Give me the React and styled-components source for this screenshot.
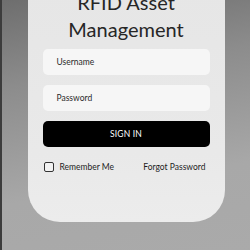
import React from "react";
import styled, { createGlobalStyle } from "styled-components";

const GlobalStyle = createGlobalStyle`
  html, body {
    margin: 0;
    padding: 0;
    width: 250px;
    height: 250px;
    overflow: hidden;
  }
  body {
    font-family: "Lato", "Open Sans", sans-serif;
  }
`;

export default function App() {
  return (
    <>
      <GlobalStyle />
      <Page>
        <Card>
          <Title>
            RFID Asset
            <br />
            Management
          </Title>
          <Form>
            <Field>Username</Field>
            <Field>Password</Field>
            <SignIn>SIGN IN</SignIn>
          </Form>
          <Options>
            <Remember>
              <Box />
              Remember Me
            </Remember>
            <Forgot>Forgot Password</Forgot>
          </Options>
        </Card>
      </Page>
    </>
  );
}

const Page = styled.div`
  width: 250px;
  height: 250px;
  box-sizing: border-box;
  border-left: 2px solid #3c3c3c;
  background: linear-gradient(170deg, #6e6e6e 0%, #8c8c8c 30%, #a8a8a8 70%, #aaaaaa 100%);
  display: flex;
  justify-content: center;
  overflow: hidden;
`;

const Card = styled.div`
  width: 197px;
  height: 233px;
  margin-top: -11px;
  box-sizing: border-box;
  background: linear-gradient(180deg, #e6e6e6 0%, #e9e9e9 70%, #ececec 100%);
  border-radius: 0 0 32px 32px;
  display: flex;
  flex-direction: column;
  padding: 0 15px 0 15px;
`;

const Title = styled.h1`
  margin: 0;
  font-family: "Lato", sans-serif;
  font-weight: 400;
  font-size: 20px;
  line-height: 27px;
  color: #262626;
  text-align: center;
`;

const Form = styled.div`
  display: flex;
  flex-direction: column;
  gap: 10px;
  margin-top: 6px;
`;

const Field = styled.div`
  height: 26px;
  border-radius: 5px;
  background: #f6f6f6;
  display: flex;
  align-items: center;
  padding-left: 14px;
  font-size: 8.5px;
  color: #2a2a2a;
`;

const SignIn = styled.button`
  height: 26px;
  border: none;
  border-radius: 5px;
  background: #000;
  color: #fff;
  font-family: "Lato", sans-serif;
  font-size: 8.5px;
  font-weight: 400;
  letter-spacing: 0.2px;
  padding: 0;
`;

const Options = styled.div`
  display: flex;
  align-items: center;
  justify-content: space-between;
  margin-top: 15px;
  padding-left: 1px;
  padding-right: 4px;
  font-size: 8.5px;
  color: #1e1e1e;
`;

const Remember = styled.label`
  display: flex;
  align-items: center;
  gap: 6px;
`;

const Box = styled.span`
  width: 8px;
  height: 8px;
  border: 1.5px solid #333;
  border-radius: 2px;
  background: #f2f2f2;
`;

const Forgot = styled.span``;
